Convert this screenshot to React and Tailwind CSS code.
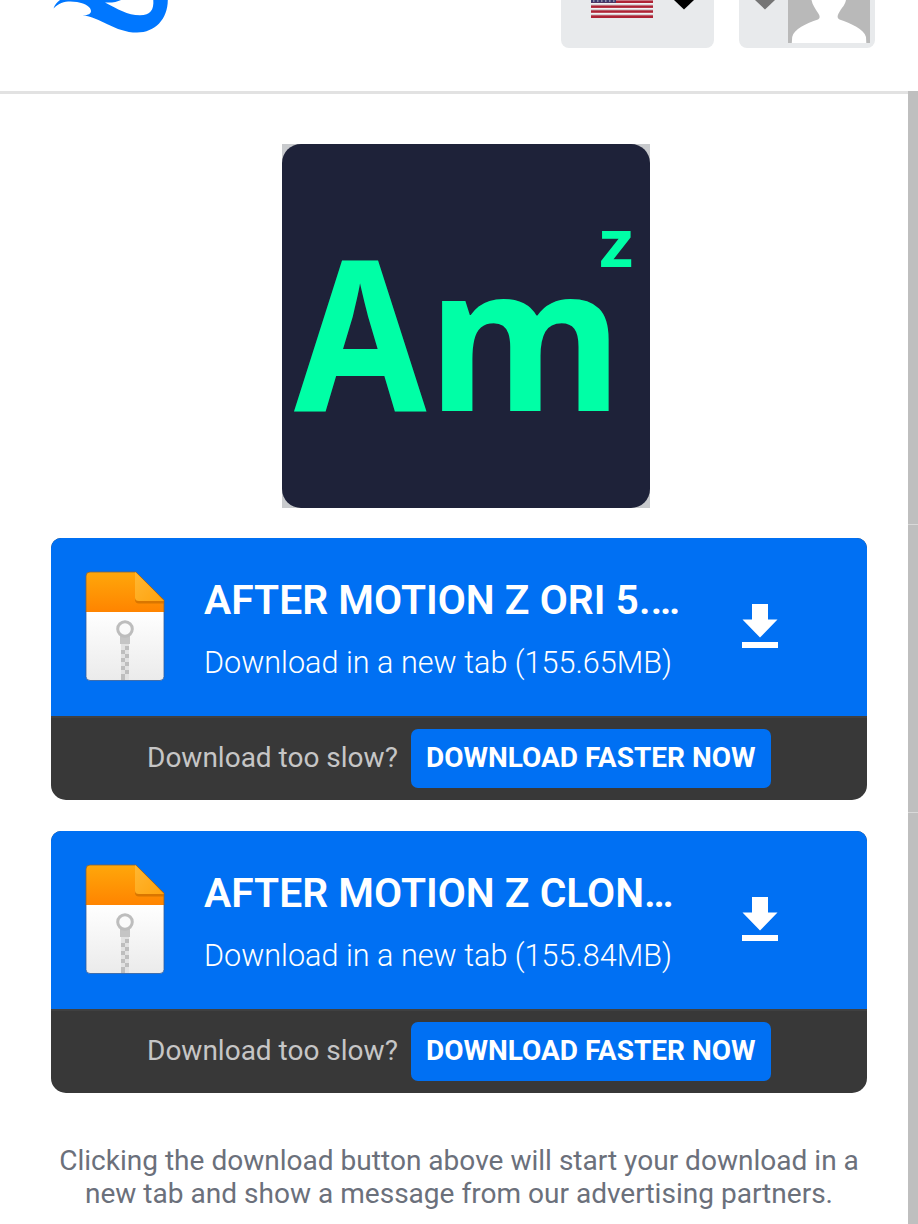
import React from "react";

function FlameLogo() {
  return (
    <svg width="130" height="40" viewBox="40 0 130 40" className="block">
      <path
        fill="#0077ff"
        d="M60 0 C57 2 54.5 5 53.5 8.5 C60 1.500 68 0.600 77 2 C86 3.400 91 7.500 91 11 C91 14 87.500 15.600 82.500 15.200 C100 17 115 32.500 137 32.500 C155 32.500 167.800 19 167.800 0 L153.300 0 C154 10 150.500 15.200 140 15.200 C127 15 118 9 105 2.400 C111 3 117 2 121 0 Z"
      />
    </svg>
  );
}

function Flag() {
  return (
    <svg width="62" height="18" viewBox="0 0 62 18" className="block">
      <rect width="62" height="18" fill="#f4f3f5" />
      <g fill="#ae2335">
        <rect x="0" y="0.400" width="62" height="2.600" />
        <rect x="0" y="5.300" width="62" height="2.600" />
        <rect x="0" y="10.200" width="62" height="2.600" />
        <rect x="0" y="15.200" width="62" height="2.800" />
      </g>
      <g stroke="#a9a0a3" strokeWidth="0.6">
        <path d="M0 4.900H62M0 9.800H62M0 14.800H62" />
      </g>
      <rect width="25" height="2.800" fill="#3c3b6e" />
      <path d="M2 1h22" stroke="#d9d9e6" strokeWidth="1" strokeDasharray="1.500 2.500" />
    </svg>
  );
}

function Caret({ color }) {
  return (
    <svg width="20" height="10" viewBox="0 0 20 10" className="block">
      <path d="M0 0H20L10 9.500Z" fill={color} />
    </svg>
  );
}

function Avatar() {
  return (
    <svg width="82" height="43" viewBox="0 0 82 43" className="block">
      <rect width="82" height="43" fill="#b9b9b9" />
      <path
        fill="#fff"
        d="M23.500 0 C24.500 5 27 8 29 11.500 C31.500 15 33 17.500 30 19.500 C18 23.500 6 29 4.200 37 L3.800 43 H78.300 L78 37 C76 29 63 23.500 51.500 19.500 C48.500 17.500 49.500 15 52 11 C54.500 7 57 5 58 0 Z"
      />
    </svg>
  );
}

function AppArtwork() {
  return (
    <div className="h-[364px] w-[368px] bg-[#c8cacd]">
      <svg width="368" height="364" viewBox="282 144 368 364" className="block">
        <rect x="282" y="144" width="368" height="364" rx="19" fill="#1e2239" />
        <g fill="#00ffa6" fontFamily="'Noto Sans', 'Open Sans', sans-serif" fontWeight="700">
          <text transform="translate(294 411) scale(0.903 0.990)" fontSize="212">A</text>
          <text transform="translate(427.500 411) scale(0.945 0.945)" fontSize="212">m</text>
          <text transform="translate(599 266.500) scale(1.040 1)" fontSize="67">z</text>
        </g>
      </svg>
    </div>
  );
}

function ZipIcon() {
  return (
    <svg width="80" height="112" viewBox="0 0 80 112" className="block">
      <defs>
        <linearGradient id="top" x1="0" y1="0" x2="0" y2="1">
          <stop offset="0" stopColor="#ffa70a" />
          <stop offset="1" stopColor="#ff8400" />
        </linearGradient>
        <linearGradient id="fold" x1="0" y1="0" x2="1" y2="1">
          <stop offset="0" stopColor="#ffb732" />
          <stop offset="1" stopColor="#ffa30f" />
        </linearGradient>
        <linearGradient id="body" x1="0" y1="0" x2="0" y2="1">
          <stop offset="0" stopColor="#fff" />
          <stop offset="1" stopColor="#ebebeb" />
        </linearGradient>
      </defs>
      <path d="M1 40H79V105.500Q79 109.500 75 109.500H5Q1 109.500 1 105.500Z" fill="url(#body)" stroke="#315d9c" strokeWidth="0.8" />
      <path d="M1 41V5Q1 1 5 1H51L79 29V41Z" fill="url(#top)" />
      <path d="M1 41V5Q1 1 5 1H51L79 29V41" fill="none" stroke="#7b6344" strokeWidth="0.8" />
      <path d="M50 5V28.500Q50 32.500 54 32.500H79V29Z" fill="#c96c00" opacity="0.7" />
      <path d="M50 1V26.500Q50 30 54 30H79Z" fill="url(#fold)" />
      <path d="M35 63V73H45V63Z" fill="#c5c5c5" />
      <circle cx="40" cy="58" r="7.300" fill="#fafafa" stroke="#bdbdbd" strokeWidth="3" />
      <path d="M36 73h8v36h-8z" fill="#e2e2e2" />
      <g fill="#bebebe">
        <path d="M40 75h4v4h-4zM36 79h4v4h-4zM40 83h4v4h-4zM36 87h4v4h-4zM40 91h4v4h-4zM36 95h4v4h-4zM40 99h4v4h-4zM36 103h4v6h-4z" />
      </g>
    </svg>
  );
}

function DownloadIcon() {
  return (
    <svg width="36" height="44" viewBox="0 0 36 44" className="block">
      <path d="M10 0H26V15.500H35.500L18 33.500L0.500 15.500H10ZM0 38H36V44H0Z" fill="#fff" />
    </svg>
  );
}

function DownloadCard({ title, size }) {
  return (
    <section className="h-[262px] overflow-hidden rounded-t-[10px] rounded-b-[15px] bg-[#383838]">
      <div className="flex h-[178px] bg-[#0070f3] pt-[33px] pl-[34px]">
        <ZipIcon />
        <div className="ml-[39px] w-[480px] pt-[5px] whitespace-nowrap text-white">
          <h2 className="text-[40.8px] leading-[48px] font-semibold">{title}</h2>
          <p className="mt-[23px] text-[30.6px] leading-[32px] font-light">Download in a new tab ({size})</p>
        </div>
        <div className="ml-[58px] pt-[33px]">
          <DownloadIcon />
        </div>
      </div>
      <div className="flex h-[84px] border-t-2 border-[#404040] pt-[11px] pl-[96px]">
        <span className="w-[263.5px] text-[28px] leading-[58px] whitespace-nowrap text-[#c6c6c6]">Download too slow?</span>
        <button className="h-[59px] w-[360.5px] rounded-[7px] bg-[#0070f3] pb-[2px] text-center text-[28px] leading-[57px] font-bold whitespace-nowrap text-white">
          DOWNLOAD FASTER NOW
        </button>
      </div>
    </section>
  );
}

export default function App() {
  return (
    <div className="flex h-[1224px] w-[918px] flex-col overflow-hidden bg-white font-['Roboto',sans-serif]">
      <header className="flex h-[94px] shrink-0 items-start border-b-[3px] border-[#e2e2e2] pl-[40px]">
        <FlameLogo />
        <div className="ml-[391px] flex h-[48px] w-[153px] items-start rounded-b-[8px] bg-[#e8eaec] pl-[30px]">
          <Flag />
          <div className="ml-[21px]">
            <Caret color="#000" />
          </div>
        </div>
        <div className="ml-[25px] flex h-[48px] w-[136px] items-start rounded-b-[8px] bg-[#e8eaec] pl-[16px]">
          <Caret color="#757575" />
          <div className="ml-[13px]">
            <Avatar />
          </div>
        </div>
      </header>
      <div className="flex flex-1">
        <main className="w-[908px] pt-[50px] pl-[51px]">
          <div className="ml-[231px]">
            <AppArtwork />
          </div>
          <div className="mt-[30px] flex w-[816px] flex-col gap-[31px]">
            <DownloadCard title="AFTER MOTION Z ORI 5.…" size="155.65MB" />
            <DownloadCard title="AFTER MOTION Z CLON…" size="155.84MB" />
          </div>
          <p className="mt-[51px] w-[816px] text-center text-[28.05px] leading-[33px] whitespace-nowrap text-[#6b707b]">
            Clicking the download button above will start your download in a
            <br />
            new tab and show a message from our advertising partners.
          </p>
        </main>
        <div className="-mt-[3px] flex w-[10px] flex-col gap-px bg-[#d9d9d9]">
          <div className="h-[433px] bg-[#bfbfbf]" />
          <div className="h-[287px] bg-[#bfbfbf]" />
          <div className="flex-1 bg-[#bfbfbf]" />
        </div>
      </div>
    </div>
  );
}
